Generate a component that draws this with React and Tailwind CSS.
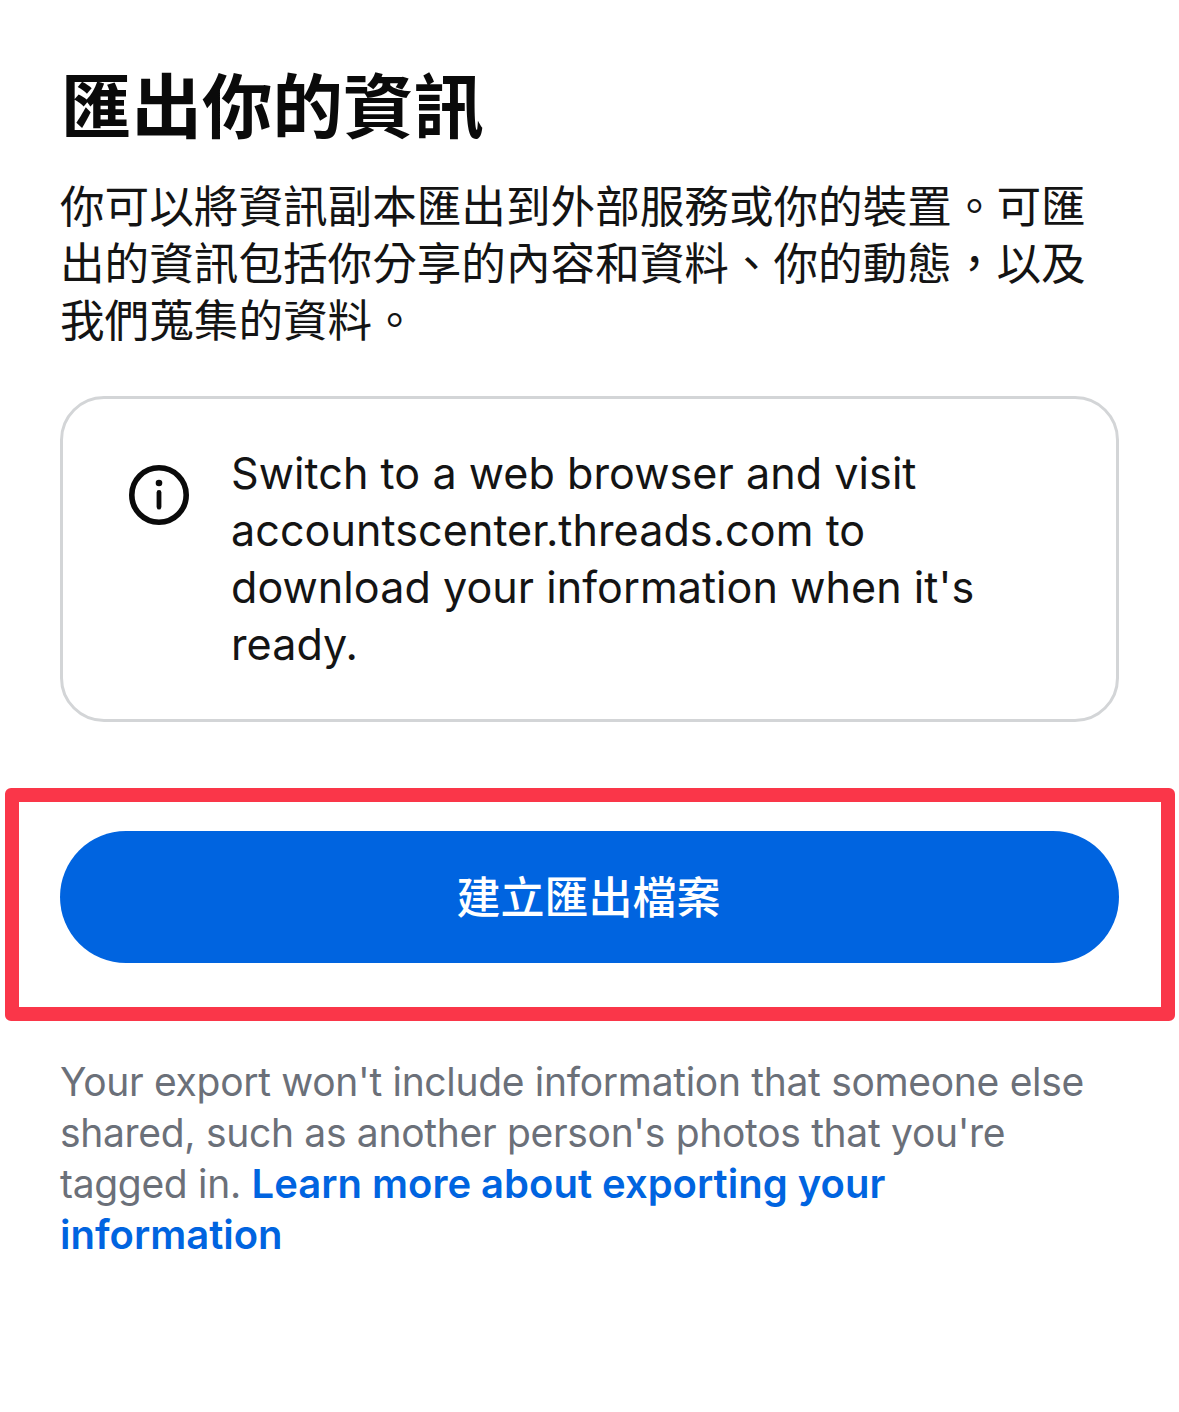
export default function App() {
  return (
    <div className="w-[1179px] h-[1412px] bg-white overflow-hidden font-['Inter','Noto_Sans_CJK_TC',sans-serif]">
      <div className="pl-[60px] pr-[60px] pt-[66px]">
        <h1 className="ml-px text-[70.5px] leading-[84px] font-bold text-[#0a0a0a]">匯出你的資訊</h1>
        <p className="mt-[29px] text-[44.6px] leading-[57px] text-[#141414] w-[1040px]">你可以將資訊副本匯出到外部服務或你的裝置。可匯出的資訊包括你分享的內容和資料、你的動態，以及我們蒐集的資料。</p>
        <div className="mt-[46px] w-[1059px] h-[326px] border-[3px] border-[#d3d5d7] rounded-[44px] flex pl-[66px] pt-[44px]">
          <svg width="60" height="60" viewBox="0 0 60 60" className="mt-[22px] shrink-0" fill="none">
            <circle cx="30" cy="30" r="27.2" stroke="#0a0a0a" strokeWidth="5.6" />
            <circle cx="30" cy="18" r="3.3" fill="#0a0a0a" />
            <rect x="27.6" y="25" width="4.8" height="19.5" rx="2.4" fill="#0a0a0a" />
          </svg>
          <p className="ml-[42px] mt-[2px] text-[43.1px] tracking-[0.05px] leading-[57px] text-[#141414] w-[800px]">Switch to a web browser and visit accountscenter.threads.com to download your information when it's ready.</p>
        </div>
      </div>
      <div className="mt-[66px] mx-[5px] w-[1170px] h-[233px] border-[14px] border-[#fa3649] rounded-[6px] pl-[41px] pt-[29px]">
        <button className="w-[1059px] h-[132px] rounded-full bg-[#0064e0] text-white text-[44px] font-medium flex items-center justify-center pr-[2px] pt-[2px]">建立匯出檔案</button>
      </div>
      <p className="mt-[35px] ml-[60px] w-[1040px] text-[39px] tracking-[-0.31px] leading-[51px] text-[#6b7079]">Your export won't include information that someone else shared, such as another person's photos that you're tagged in. <span className="text-[40px] tracking-normal font-semibold text-[#0064e0]">Learn more about exporting your information</span></p>
    </div>
  );
}
